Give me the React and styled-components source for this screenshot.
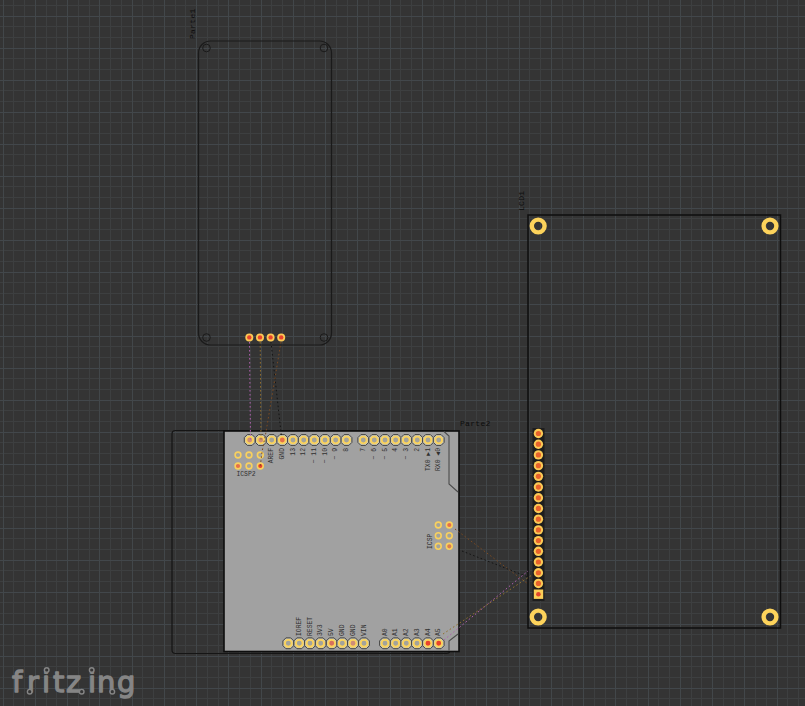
import styled, { createGlobalStyle } from "styled-components";

const GlobalStyle = createGlobalStyle`
  html, body {
    margin: 0;
    padding: 0;
    background: #343434;
  }
`;

const Canvas = styled.div`
  position: relative;
  width: 805px;
  height: 706px;
  overflow: hidden;
  background-color: #343434;
  background-image:
    repeating-linear-gradient(90deg, transparent 0 2.6px, #42474a 2.6px 3.6px, transparent 3.6px 32.25px),
    repeating-linear-gradient(180deg, transparent 0 15.6px, #42474b 15.6px 16.6px, transparent 16.6px 32px),
    repeating-linear-gradient(90deg, transparent 0 2.6px, #3d3f40 2.6px 3.6px, transparent 3.6px 10.75px),
    repeating-linear-gradient(180deg, transparent 0 4.9px, #3d3f40 4.9px 5.9px, transparent 5.9px 10.67px);
`;

const Sheet = styled.svg`
  position: absolute;
  left: ${(p) => p.$x}px;
  top: ${(p) => p.$y}px;
  width: ${(p) => p.$w}px;
  height: ${(p) => p.$h}px;
  overflow: visible;
`;

const Label = styled.text`
  font-family: "Liberation Mono", monospace;
  font-size: ${(p) => p.$size || 6.5}px;
  fill: ${(p) => (p.$outside ? "#0c0c0c" : "#303030")};
  letter-spacing: ${(p) => p.$spacing || 0}px;
`;

const PartSheet = ({ x, y, w, h, children }) => (
  <Sheet $x={x} $y={y} $w={w} $h={h} viewBox={`${x} ${y} ${w} ${h}`}>
    {children}
  </Sheet>
);

const RED = "#e8432c";
const ORANGE = "#e5704a";
const PINK = "#cf8d78";
const GREY = "#a3a39c";

const HeaderPin = ({ x, y, center = GREY }) => {
  const a = 5.4;
  const b = 2.4;
  const points = [
    [x - b, y - a],
    [x + b, y - a],
    [x + a, y - b],
    [x + a, y + b],
    [x + b, y + a],
    [x - b, y + a],
    [x - a, y + b],
    [x - a, y - b],
  ]
    .map((pt) => pt.join(","))
    .join(" ");
  return (
    <g>
      <polygon points={points} fill="#c9c7b4" stroke="#444" strokeWidth="1" />
      <circle cx={x} cy={y} r="3.4" fill={center} stroke="#fbd35c" strokeWidth="1.9" />
    </g>
  );
};

const RingPin = ({ x, y, center = GREY }) => (
  <circle cx={x} cy={y} r="2.9" fill={center} stroke="#f9d15e" strokeWidth="1.6" />
);

const HotPin = ({ x, y, r = 4 }) => (
  <g>
    <circle cx={x} cy={y} r={r} fill="#fbc955" />
    <circle cx={x} cy={y} r={r - 1.8} fill={RED} />
  </g>
);

// pin labels read bottom to top; top row hangs down from y, bottom row rises from y
const UpLabel = ({ x, y, rise, children }) => (
  <Label
    x={x}
    y={y}
    $size={6.4}
    transform={`rotate(-90 ${x} ${y})`}
    textAnchor={rise ? "start" : "end"}
    dominantBaseline="middle"
  >
    {children}
  </Label>
);

const Parte1 = () => (
  <PartSheet x={180} y={0} w={170} h={360}>
    <Label x={195} y={39} $size={8} $spacing={0.3} $outside transform="rotate(-90 195 39)">
      Parte1
    </Label>
    <rect x="198.5" y="41" width="133" height="304" rx="12" fill="none" stroke="#1a1a1a" strokeWidth="1.2" />
    {[
      [206.5, 48],
      [324, 48],
      [206.5, 337.5],
      [324, 337.5],
    ].map(([cx, cy]) => (
      <circle key={`${cx}-${cy}`} cx={cx} cy={cy} r="3.8" fill="none" stroke="#1a1a1a" strokeWidth="1" />
    ))}
    {[249.3, 260, 270.6, 281.2].map((x) => (
      <HotPin key={x} x={x} y={337.4} />
    ))}
  </PartSheet>
);

const topPins = [
  [249.7, "", PINK],
  [260.8, "", PINK],
  [271.7, "AREF"],
  [282.3, "GND", ORANGE],
  [293, "13"],
  [303.7, "12"],
  [314.3, "~ 11"],
  [325, "~ 10"],
  [335.7, "~ 9"],
  [346.5, "8"],
  [363.3, "7"],
  [374.3, "~ 6"],
  [385, "~ 5"],
  [395.7, "4"],
  [406.3, "~ 3"],
  [417.3, "2"],
  [428, "TX0 ▶1"],
  [438.7, "RX0 ◀0"],
];

const bottomPins = [
  [288.3, ""],
  [299.3, "IOREF"],
  [310, "RESET"],
  [320.7, "3V3"],
  [331.7, "5V", "#d9705c"],
  [342.3, "GND"],
  [353, "GND", PINK],
  [364, "VIN"],
  [385, "A0"],
  [395.7, "A1"],
  [406.3, "A2"],
  [417, "A3"],
  [428, "A4", RED],
  [438.7, "A5", RED],
];

const Parte2 = () => (
  <PartSheet x={165} y={415} w={340} h={245}>
    <rect x="172" y="430.5" width="278" height="223" rx="3.5" fill="none" stroke="#151515" strokeWidth="1.2" />
    <rect x="224" y="431" width="235" height="220.5" fill="#a1a1a1" stroke="#0e0e0e" strokeWidth="1.6" />
    <path
      d="M444 431.5 L449 436 L449 484 L458 492 M458 634 L449 641 L449 650.5"
      fill="none"
      stroke="#4c4c4c"
      strokeWidth="1.1"
    />
    <Label x={460} y={426} $size={8} $spacing={0.3} $outside>
      Parte2
    </Label>
    {topPins.map(([x, label, center]) => (
      <g key={x}>
        <HeaderPin x={x} y={440} center={center} />
        {label && <UpLabel x={x} y={448}>{label}</UpLabel>}
      </g>
    ))}
    {bottomPins.map(([x, label, center]) => (
      <g key={x}>
        <HeaderPin x={x} y={643.3} center={center} />
        {label && <UpLabel x={x} y={636} rise>{label}</UpLabel>}
      </g>
    ))}
    <RingPin x={238} y={455} />
    <RingPin x={249} y={455} />
    <RingPin x={260.3} y={455} />
    <RingPin x={238} y={466} center={ORANGE} />
    <RingPin x={249} y={466} />
    <RingPin x={260.3} y={466} center={RED} />
    <Label x={246} y={476} $size={6.4} textAnchor="middle">
      ICSP2
    </Label>
    <RingPin x={438.3} y={525} />
    <RingPin x={449.3} y={525} center={ORANGE} />
    <RingPin x={438.3} y={535.7} />
    <RingPin x={449.3} y={535.7} />
    <RingPin x={438.3} y={546.3} />
    <RingPin x={449.3} y={546.3} center="#d97d52" />
    <UpLabel x={430.5} y={549} rise>ICSP</UpLabel>
  </PartSheet>
);

const lcdPinYs = Array.from({ length: 15 }, (_, i) => 433.5 + i * 10.71);

const Lcd = () => (
  <PartSheet x={510} y={190} w={280} h={445}>
    <Label x={524} y={211} $size={8} $spacing={0.3} $outside transform="rotate(-90 524 211)">
      LCD1
    </Label>
    <rect x="528" y="215" width="252.5" height="413" fill="none" stroke="#0e0e0e" strokeWidth="1.5" />
    {[
      [538.2, 226],
      [770, 226],
      [538.2, 617],
      [770, 617],
    ].map(([cx, cy]) => (
      <circle key={`${cx}-${cy}`} cx={cx} cy={cy} r="6.4" fill="none" stroke="#fdd35b" strokeWidth="4.4" />
    ))}
    <rect x="532.5" y="428" width="12" height="173" fill="#1d1d1d" />
    {lcdPinYs.map((y) => (
      <g key={y}>
        <circle cx="538.4" cy={y} r="4.7" fill="#fbc955" />
        <circle cx="538.4" cy={y} r="2.6" fill="#e8622c" />
      </g>
    ))}
    <rect x="533.8" y="589.5" width="9.4" height="9.4" fill="#fbce57" />
    <circle cx="538.4" cy="594.2" r="2.3" fill="#e2452c" />
  </PartSheet>
);

const Wire = styled.polyline`
  fill: none;
  stroke: ${(p) => p.color};
  stroke-width: 1;
  stroke-dasharray: 1.6 2.4;
`;

const Wires = () => (
  <PartSheet x={0} y={0} w={805} h={706}>
    <Wire color="#b060ae" points="249.5,342 250.5,440" />
    <Wire color="#8f6c2e" points="260.2,342 261,440" />
    <Wire color="#141414" points="271,342 281.5,437" />
    <Wire color="#7a4a22" points="281,342 266,432 262,452 260.3,466" />
    <Wire color="#7a4a22" points="455,529 528,584" />
    <Wire color="#141414" points="462,551 528,577" />
    <Wire color="#b060ae" points="444,640 528,571" />
    <Wire color="#8f702e" points="443,634 532,575" />
  </PartSheet>
);

const LogoText = styled.text`
  font-family: "DejaVu Sans", sans-serif;
  font-size: 29px;
  fill: #858585;
  stroke: #858585;
  stroke-width: 1.3px;
  stroke-linejoin: round;
`;

const Logo = () => (
  <PartSheet x={0} y={655} w={160} h={51}>
    <LogoText x="12 27 42 53 66 88 97 117" y={692}>
      fritzing
    </LogoText>
    <g fill="#343434" stroke="#858585" strokeWidth="1.4">
      <circle cx="29.7" cy="691.7" r="2.3" />
      <circle cx="46.7" cy="670" r="2.3" />
      <circle cx="81.7" cy="691.7" r="2.3" />
      <circle cx="91.7" cy="670" r="2.3" />
      <circle cx="112.3" cy="691.7" r="2.3" />
    </g>
  </PartSheet>
);

const App = () => (
  <>
    <GlobalStyle />
    <Canvas>
      <Parte1 />
      <Parte2 />
      <Lcd />
      <Wires />
      <Logo />
    </Canvas>
  </>
);

export default App;
